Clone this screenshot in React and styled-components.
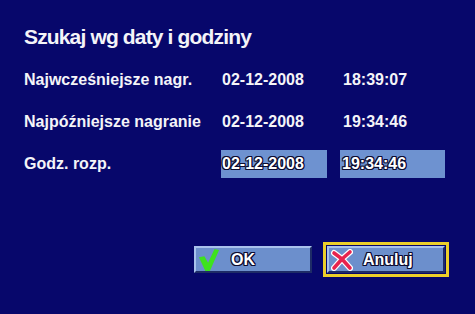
import styled, { createGlobalStyle } from "styled-components";

const Global = createGlobalStyle`
  html, body {
    margin: 0;
    padding: 0;
    background: #07076b;
  }
  body {
    font-family: "Liberation Sans", Arial, sans-serif;
    color: #ffffff;
  }
`;

const Screen = styled.div`
  width: 475px;
  height: 314px;
  box-sizing: border-box;
  padding: 25px 0 0 24px;
  background: #07076b;
  overflow: hidden;
`;

const Title = styled.h1`
  margin: 0;
  font-size: 21px;
  line-height: 24px;
  font-weight: bold;
  letter-spacing: -0.85px;
  color: #f4f4f8;
`;

const Rows = styled.div`
  margin-top: 10px;
  display: grid;
  grid-template-columns: 197px 119px 105px;
  grid-auto-rows: 42px;
  align-items: center;
`;

const Label = styled.div`
  font-size: 16px;
  font-weight: bold;
  color: #f4f4f8;
  padding-left: ${(p) => p.$shift || 0}px;
`;

const Field = styled.div`
  height: 28px;
  box-sizing: border-box;
  padding-left: ${(p) => p.$pad || 1}px;
  display: flex;
  align-items: center;
  background: #6e92d0;
  font-size: 16px;
  font-weight: bold;
  color: #ffffff;
  text-shadow: -1px -1px 0 #0c0c30, 1px -1px 0 #0c0c30, -1px 1px 0 #0c0c30,
    1px 1px 0 #0c0c30, 0 1px 0 #0c0c30, 0 -1px 0 #0c0c30, 1px 0 0 #0c0c30,
    -1px 0 0 #0c0c30;
`;

const Footer = styled.div`
  margin-top: 57px;
  display: flex;
  align-items: center;
  padding-left: 170px;
  gap: 11px;
`;

const Focus = styled.div`
  padding: 1px;
  border: 3px solid #eccf2a;
  background: #07076b;
  display: flex;
`;

const Button = styled.div`
  width: 118px;
  height: 27px;
  box-sizing: border-box;
  display: flex;
  align-items: center;
  gap: ${(p) => p.$gap}px;
  padding-left: 2px;
  background: #6c8fcc;
  border-top: 2px solid #a9c2ec;
  border-left: 2px solid #a9c2ec;
  border-bottom: 2px solid #1e2c66;
  border-right: 2px solid #1e2c66;
  font-size: 16px;
  font-weight: bold;
  color: #ffffff;
  text-shadow: -1px -1px 0 #0c0c30, 1px -1px 0 #0c0c30, -1px 1px 0 #0c0c30,
    1px 1px 0 #0c0c30, 0 1px 0 #0c0c30, 0 -1px 0 #0c0c30, 1px 0 0 #0c0c30,
    -1px 0 0 #0c0c30;
`;

const Check = () => (
  <svg width="22" height="22" viewBox="0 0 22 24">
    <path d="M0 9 L6 8 L10 15 L17 0 L22 1 L12 24 L7 24 Z" fill="#3ee21e" />
  </svg>
);

const Cross = () => (
  <svg width="22" height="22" viewBox="0 0 22 22">
    <path
      d="M3 4 L11 10 L19 3 M11 10 L3 19 M11 10 L19 19"
      stroke="#ffffff"
      strokeWidth="6"
      strokeLinecap="round"
      fill="none"
    />
    <path
      d="M3 4 L11 10 L19 3 M11 10 L3 19 M11 10 L19 19"
      stroke="#e8234e"
      strokeWidth="3.6"
      strokeLinecap="round"
      fill="none"
    />
  </svg>
);

export default function App() {
  return (
    <Screen>
      <Global />
      <Title>Szukaj wg daty i godziny</Title>
      <Rows>
        <Label>Najwcześniejsze nagr.</Label>
        <Label $shift={1}>02-12-2008</Label>
        <Label $shift={3}>18:39:07</Label>

        <Label>Najpóźniejsze nagranie</Label>
        <Label $shift={1}>02-12-2008</Label>
        <Label $shift={3}>19:34:46</Label>

        <Label>Godz. rozp.</Label>
        <Field style={{ width: 106 }}>02-12-2008</Field>
        <Field style={{ width: 105 }} $pad={2}>19:34:46</Field>
      </Rows>
      <Footer>
        <Button $gap={11}>
          <Check />
          OK
        </Button>
        <Focus>
          <Button $gap={10}>
            <Cross />
            Anuluj
          </Button>
        </Focus>
      </Footer>
    </Screen>
  );
}
